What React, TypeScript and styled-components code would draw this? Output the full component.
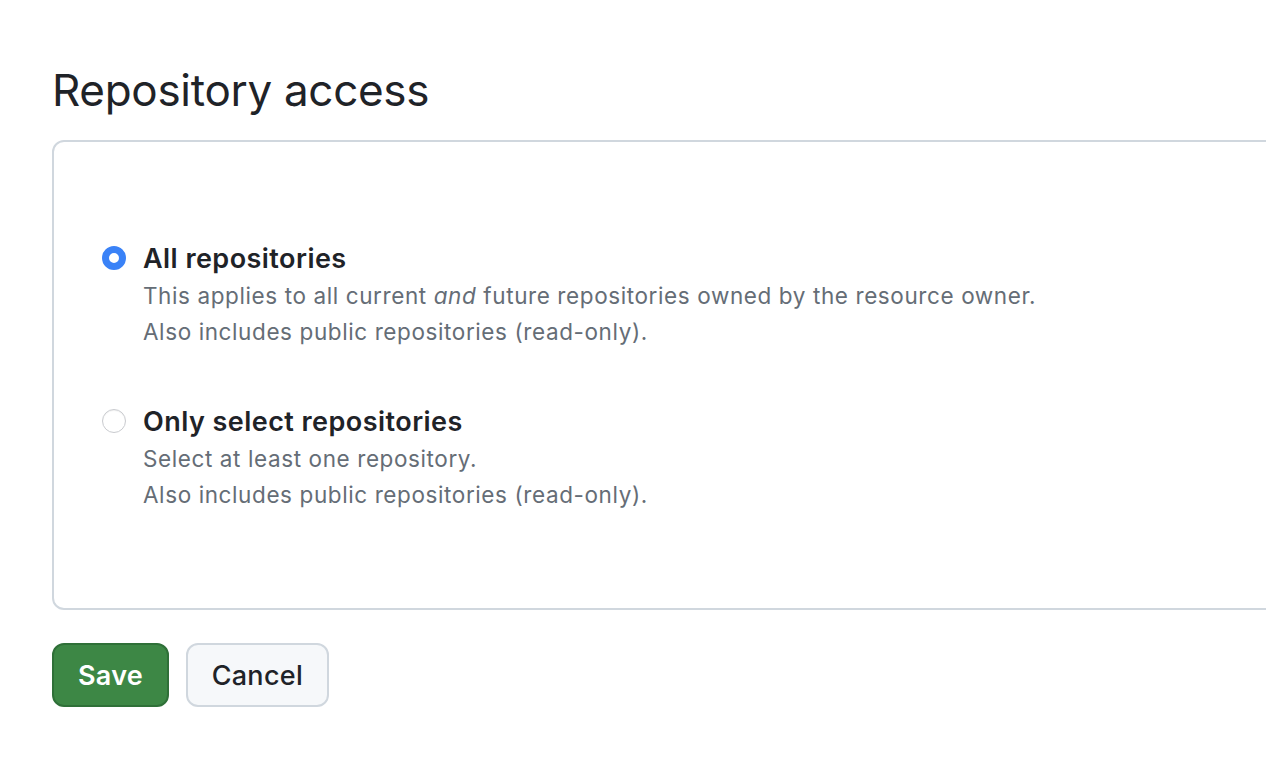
import * as React from "react";
import styled, { createGlobalStyle } from "styled-components";

const Global = createGlobalStyle`
  html, body {
    margin: 0;
    padding: 0;
    background: #fff;
    overflow: hidden;
  }
  body {
    font-family: Inter, "Noto Sans", "Liberation Sans", sans-serif;
    color: #1f2328;
  }
`;

const Page = styled.div`
  padding: 62px 0 0 52px;
  width: 1300px;
`;
const Title = styled.h2`
  margin: 0 0 22px;
  font-size: 44px;
  font-weight: 400;
  line-height: 56px;
  letter-spacing: -0.3px;
`;
const Box = styled.div`
  box-sizing: border-box;
  width: 1260px;
  height: 470px;
  border: 2px solid #d0d7de;
  border-radius: 12px;
  padding: 98px 48px 0;
  display: flex;
  flex-direction: column;
  gap: 53px;
`;
const Option = styled.label`
  display: flex;
  gap: 17px;
  align-items: flex-start;
`;
const Radio = styled.span<{ $checked?: boolean }>`
  box-sizing: border-box;
  flex: none;
  width: 24px;
  height: 24px;
  margin-top: 6px;
  border-radius: 50%;
  background: #fff;
  border: ${(p) => (p.$checked ? "7px solid #3a82f7" : "1.5px solid #c9cbcf")};
  box-shadow: ${(p) => (p.$checked ? "none" : "inset 0 1px 1px rgba(0,0,0,0.06)")};
`;
const Text = styled.div`
  display: flex;
  flex-direction: column;
`;
const Label = styled.span`
  font-size: 27px;
  font-weight: 600;
  line-height: 38px;
  letter-spacing: 0.45px;
`;
const Note = styled.span`
  font-size: 22.5px;
  line-height: 36px;
  letter-spacing: 0.6px;
  color: #656d76;
`;
const Actions = styled.div`
  display: flex;
  gap: 17px;
  margin-top: 33px;
`;
const Button = styled.button<{ $primary?: boolean }>`
  box-sizing: border-box;
  height: 64px;
  padding: 0 ${(p) => (p.$primary ? 24 : 23.5)}px;
  border-radius: 12px;
  font-family: inherit;
  font-size: 27px;
  letter-spacing: 0.3px;
  font-weight: ${(p) => (p.$primary ? 600 : 500)};
  color: ${(p) => (p.$primary ? "#fff" : "#1f2328")};
  background: ${(p) => (p.$primary ? "#3d8745" : "#f6f8fa")};
  border: 2px solid ${(p) => (p.$primary ? "#2f7038" : "#d0d7de")};
`;

export default function App() {
  return (
    <>
      <Global />
      <Page>
        <Title>Repository access</Title>
        <Box>
          <Option>
            <Radio $checked />
            <Text>
              <Label>All repositories</Label>
              <Note>
                This applies to all current <i>and</i> future repositories owned by the resource owner.
              </Note>
              <Note>Also includes public repositories (read-only).</Note>
            </Text>
          </Option>
          <Option>
            <Radio />
            <Text>
              <Label>Only select repositories</Label>
              <Note>Select at least one repository.</Note>
              <Note>Also includes public repositories (read-only).</Note>
            </Text>
          </Option>
        </Box>
        <Actions>
          <Button $primary>Save</Button>
          <Button>Cancel</Button>
        </Actions>
      </Page>
    </>
  );
}
